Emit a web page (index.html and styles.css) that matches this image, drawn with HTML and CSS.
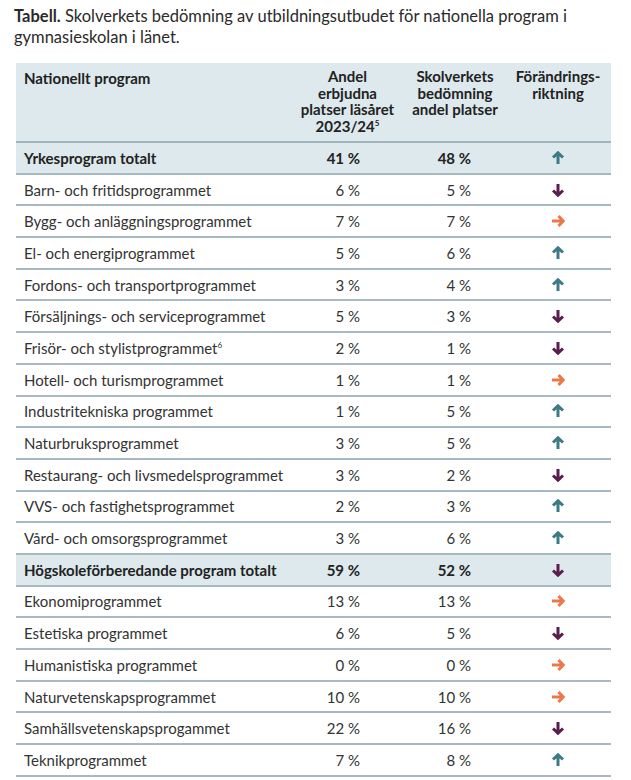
FILE: index.html
```html
<!DOCTYPE html>
<html lang="sv">
<head>
<meta charset="utf-8">
<link rel="stylesheet" href="styles.css">
</head>
<body>
<p class="caption"><b>Tabell.</b> Skolverkets bedömning av utbildningsutbudet för nationella program i gymnasieskolan i länet.</p>
<table class="tbl">
  <colgroup><col class="c1"><col class="c2"><col class="c3"><col class="c4"></colgroup>
  <thead>
    <tr>
      <th class="name">Nationellt program</th>
      <th>Andel<br>erbjudna<br>platser läsåret<br>2023/24<sup>5</sup></th>
      <th>Skolverkets<br>bedömning<br>andel platser</th>
      <th>Förändrings-<br>riktning</th>
    </tr>
  </thead>
  <tbody>
    <tr class="total"><td>Yrkesprogram totalt</td><td class="n2">41 %</td><td class="n3">48 %</td><td class="dir"><svg class="ar up" viewBox="0 0 14 14"><path d="M7 13V2M2 6.5L7 1.8L12 6.5"/></svg></td></tr>
    <tr><td>Barn- och fritidsprogrammet</td><td class="n2">6 %</td><td class="n3">5 %</td><td class="dir"><svg class="ar down" viewBox="0 0 14 14"><path d="M7 1V12M2 7.5L7 12.2L12 7.5"/></svg></td></tr>
    <tr><td>Bygg- och anläggningsprogrammet</td><td class="n2">7 %</td><td class="n3">7 %</td><td class="dir"><svg class="ar right" viewBox="0 0 14 14"><path d="M1 7H12M7.5 2L12.2 7L7.5 12"/></svg></td></tr>
    <tr><td>El- och energiprogrammet</td><td class="n2">5 %</td><td class="n3">6 %</td><td class="dir"><svg class="ar up" viewBox="0 0 14 14"><path d="M7 13V2M2 6.5L7 1.8L12 6.5"/></svg></td></tr>
    <tr><td>Fordons- och transportprogrammet</td><td class="n2">3 %</td><td class="n3">4 %</td><td class="dir"><svg class="ar up" viewBox="0 0 14 14"><path d="M7 13V2M2 6.5L7 1.8L12 6.5"/></svg></td></tr>
    <tr><td>Försäljnings- och serviceprogrammet</td><td class="n2">5 %</td><td class="n3">3 %</td><td class="dir"><svg class="ar down" viewBox="0 0 14 14"><path d="M7 1V12M2 7.5L7 12.2L12 7.5"/></svg></td></tr>
    <tr><td>Frisör- och stylistprogrammet<sup>6</sup></td><td class="n2">2 %</td><td class="n3">1 %</td><td class="dir"><svg class="ar down" viewBox="0 0 14 14"><path d="M7 1V12M2 7.5L7 12.2L12 7.5"/></svg></td></tr>
    <tr><td>Hotell- och turismprogrammet</td><td class="n2">1 %</td><td class="n3">1 %</td><td class="dir"><svg class="ar right" viewBox="0 0 14 14"><path d="M1 7H12M7.5 2L12.2 7L7.5 12"/></svg></td></tr>
    <tr><td>Industritekniska programmet</td><td class="n2">1 %</td><td class="n3">5 %</td><td class="dir"><svg class="ar up" viewBox="0 0 14 14"><path d="M7 13V2M2 6.5L7 1.8L12 6.5"/></svg></td></tr>
    <tr><td>Naturbruksprogrammet</td><td class="n2">3 %</td><td class="n3">5 %</td><td class="dir"><svg class="ar up" viewBox="0 0 14 14"><path d="M7 13V2M2 6.5L7 1.8L12 6.5"/></svg></td></tr>
    <tr><td>Restaurang- och livsmedelsprogrammet</td><td class="n2">3 %</td><td class="n3">2 %</td><td class="dir"><svg class="ar down" viewBox="0 0 14 14"><path d="M7 1V12M2 7.5L7 12.2L12 7.5"/></svg></td></tr>
    <tr><td>VVS- och fastighetsprogrammet</td><td class="n2">2 %</td><td class="n3">3 %</td><td class="dir"><svg class="ar up" viewBox="0 0 14 14"><path d="M7 13V2M2 6.5L7 1.8L12 6.5"/></svg></td></tr>
    <tr><td>Vård- och omsorgsprogrammet</td><td class="n2">3 %</td><td class="n3">6 %</td><td class="dir"><svg class="ar up" viewBox="0 0 14 14"><path d="M7 13V2M2 6.5L7 1.8L12 6.5"/></svg></td></tr>
    <tr class="total"><td>Högskoleförberedande program totalt</td><td class="n2">59 %</td><td class="n3">52 %</td><td class="dir"><svg class="ar down" viewBox="0 0 14 14"><path d="M7 1V12M2 7.5L7 12.2L12 7.5"/></svg></td></tr>
    <tr><td>Ekonomiprogrammet</td><td class="n2">13 %</td><td class="n3">13 %</td><td class="dir"><svg class="ar right" viewBox="0 0 14 14"><path d="M1 7H12M7.5 2L12.2 7L7.5 12"/></svg></td></tr>
    <tr><td>Estetiska programmet</td><td class="n2">6 %</td><td class="n3">5 %</td><td class="dir"><svg class="ar down" viewBox="0 0 14 14"><path d="M7 1V12M2 7.5L7 12.2L12 7.5"/></svg></td></tr>
    <tr><td>Humanistiska programmet</td><td class="n2">0 %</td><td class="n3">0 %</td><td class="dir"><svg class="ar right" viewBox="0 0 14 14"><path d="M1 7H12M7.5 2L12.2 7L7.5 12"/></svg></td></tr>
    <tr><td>Naturvetenskapsprogrammet</td><td class="n2">10 %</td><td class="n3">10 %</td><td class="dir"><svg class="ar right" viewBox="0 0 14 14"><path d="M1 7H12M7.5 2L12.2 7L7.5 12"/></svg></td></tr>
    <tr><td>Samhällsvetenskapsprogammet</td><td class="n2">22 %</td><td class="n3">16 %</td><td class="dir"><svg class="ar down" viewBox="0 0 14 14"><path d="M7 1V12M2 7.5L7 12.2L12 7.5"/></svg></td></tr>
    <tr><td>Teknikprogrammet</td><td class="n2">7 %</td><td class="n3">8 %</td><td class="dir"><svg class="ar up" viewBox="0 0 14 14"><path d="M7 13V2M2 6.5L7 1.8L12 6.5"/></svg></td></tr>
  </tbody>
</table>
</body>
</html>
```
FILE: styles.css
```css
html, body {
  margin: 0;
  padding: 0;
  background: #fff;
}
body {
  font-family: Lato, "Noto Sans", sans-serif;
  color: #2b2b2b;
  padding: 6px 16px 0 14px;
}
.caption {
  margin: 0 0 16px 0;
  font-size: 16.5px;
  line-height: 20.5px;
  color: #2a2a2a;
  width: 590px;
}
.caption b {
  font-weight: 700;
}
.tbl {
  border-collapse: collapse;
  table-layout: fixed;
  width: 595px;
  margin-left: 2px;
  font-size: 15px;
}
.c1 { width: 274px; }
.c2 { width: 115px; }
.c3 { width: 100px; }
.c4 { width: 106px; }
thead tr {
  background: #dde9ec;
}
th {
  font-weight: 700;
  text-align: center;
  vertical-align: top;
  line-height: 16.5px;
  padding: 5px 2px 5px 2px;
  height: 66px;
  border-bottom: 2px solid #9fb4bb;
  color: #222;
}
th.name {
  text-align: left;
  padding-left: 8px;
  padding-top: 7px;
}
th sup, td sup {
  font-size: 8px;
  line-height: 0;
  vertical-align: 6px;
}
td {
  height: 29.7px;
  padding: 0 8px;
  border-bottom: 2px solid #a7bac1;
  color: #333;
  white-space: nowrap;
}
tr.total {
  background: #dde9ec;
}
tr.total td {
  font-weight: 700;
  color: #222;
}
td.n2 {
  text-align: right;
  padding-right: 45px;
}
td.n3 {
  text-align: right;
  padding-right: 34px;
}
td.dir {
  text-align: center;
  padding: 0;
}
.ar {
  width: 14px;
  height: 14px;
  display: block;
  margin: 0 auto;
  fill: none;
  stroke-width: 3;
  stroke-linecap: butt;
  stroke-linejoin: miter;
}
.up { stroke: #3c7b86; }
.down { stroke: #5b1d4d; }
.right { stroke: #ec7848; }
```
